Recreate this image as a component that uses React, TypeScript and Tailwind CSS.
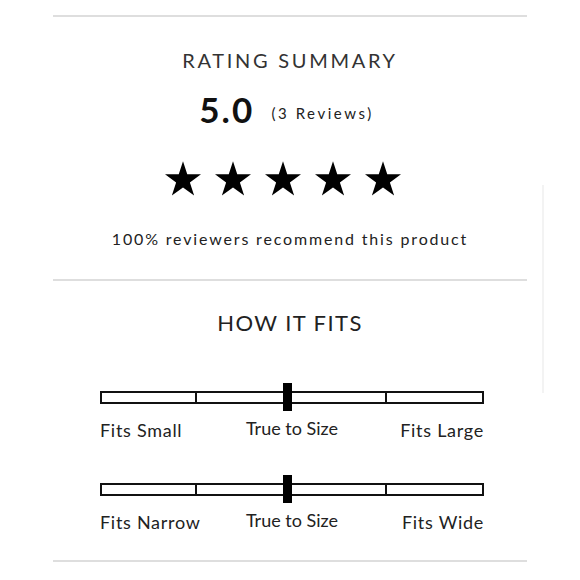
import React from "react";

const Star = () => (
  <svg width="36" height="35" viewBox="0 0 36 34.5" className="block mr-[14px]">
    <polygon
      fill="#000"
      points="18,0 22.25,13.08 36,13.08 24.88,21.16 29.13,34.24 18,26.16 6.87,34.24 11.12,21.16 0,13.08 13.75,13.08"
    />
  </svg>
);

const FitBar = ({ left, right }: { left: string; right: string }) => (
  <div className="ml-[47px] w-[384px]">
    <div className="relative h-[28px]">
      <div className="absolute left-0 top-[8px] w-[384px] h-[13px] border-2 border-[#111] grid grid-cols-4">
        <div className="border-r-2 border-[#111]" />
        <div className="border-r-2 border-[#111]" />
        <div className="border-r-2 border-[#111]" />
        <div />
      </div>
      <div className="absolute left-[183px] top-0 w-[9px] h-[28px] bg-black" />
    </div>
    <div className="grid grid-cols-3 mt-[10px] text-[18px] leading-none text-[#222]">
      <span className="text-left whitespace-nowrap tracking-[0.04em]">{left}</span>
      <span className="text-center whitespace-nowrap -mt-[2px] tracking-[0em]">True to Size</span>
      <span className="text-right whitespace-nowrap tracking-[0.04em]">{right}</span>
    </div>
  </div>
);

export default function App() {
  return (
    <div className="relative w-[580px] h-[580px] bg-white font-['Lato',sans-serif] overflow-hidden">
      <div className="mx-[53px] pt-[15px]">
        <div className="h-[2px] bg-[#dedede]" />
        <section className="flex flex-col items-center">
          <h2 className="mt-[33px] text-[20px] leading-none tracking-[0.135em] text-[#333] font-normal">
            RATING SUMMARY
          </h2>
          <div className="mt-[22px] flex items-end pr-[7px]">
            <span className="text-[35px] leading-none font-bold text-[#111] tracking-[0.06em]">5.0</span>
            <span className="ml-[17px] mb-[6px] text-[15px] leading-none tracking-[0.17em] text-[#222]">
              (3 Reviews)
            </span>
          </div>
          <div className="mt-[34px] flex">
            <Star />
            <Star />
            <Star />
            <Star />
            <Star />
          </div>
          <p className="mt-[35px] text-[16px] leading-none tracking-[0.115em] text-[#222]">
            100% reviewers recommend this product
          </p>
        </section>
        <div className="mt-[32px] h-[2px] bg-[#dedede]" />
        <section className="flex flex-col">
          <h2 className="mt-[31px] self-center text-[22px] leading-none tracking-[0.065em] text-[#222] font-normal">
            HOW IT FITS
          </h2>
          <div className="mt-[49px]">
            <FitBar left="Fits Small" right="Fits Large" />
          </div>
          <div className="mt-[36px]">
            <FitBar left="Fits Narrow" right="Fits Wide" />
          </div>
        </section>
        <div className="mt-[29px] h-[2px] bg-[#dedede]" />
      </div>
      <div className="absolute left-[542px] top-[185px] w-[2px] h-[208px] bg-[#f3f3f3]" />
    </div>
  );
}
